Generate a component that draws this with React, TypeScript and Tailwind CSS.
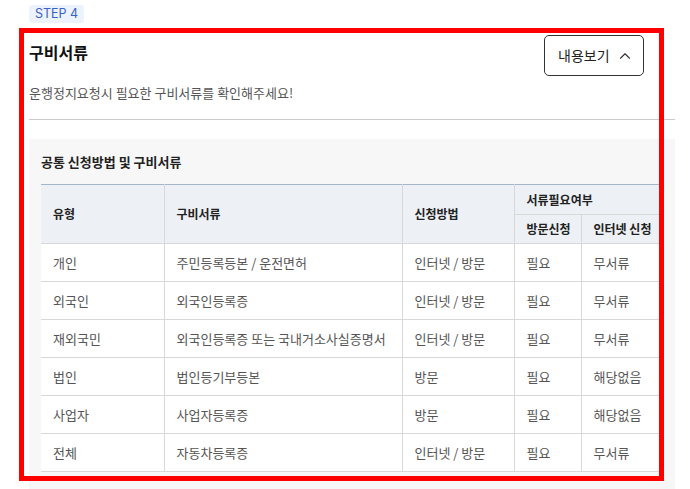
import { ChevronUp } from 'lucide-react'

const ROWS: Array<[string, string, string, string, string]> = [
  ['개인', '주민등록등본 / 운전면허', '인터넷 / 방문', '필요', '무서류'],
  ['외국인', '외국인등록증', '인터넷 / 방문', '필요', '무서류'],
  ['재외국민', '외국인등록증 또는 국내거소사실증명서', '인터넷 / 방문', '필요', '무서류'],
  ['법인', '법인등기부등본', '방문', '필요', '해당없음'],
  ['사업자', '사업자등록증', '방문', '필요', '해당없음'],
  ['전체', '자동차등록증', '인터넷 / 방문', '필요', '무서류'],
]

const th = 'border-r border-b border-[#d8d8d8] bg-[#edf0f5] pl-3 text-left text-[12px] font-bold text-[#222]'
const td = 'h-[38px] border-b border-r border-[#d8d8d8] pl-3 text-[13px] text-[#555]'

export default function App() {
  return (
    <div className="relative h-[489px] w-[690px] overflow-hidden bg-white font-['Noto_Sans_CJK_KR','Noto_Sans',sans-serif]">
      <div className="pl-[29px] pr-[15px] pt-[5px]">
        <div className="h-[18px] w-fit rounded-[3px] bg-[#edf3fd] px-[6px] text-[12.5px] leading-[18px] text-[#3b62c4] font-['Inter','Noto_Sans_CJK_KR',sans-serif]">
          STEP 4
        </div>

        <div className="mt-[12px] flex items-start justify-between">
          <h2 className="mt-[5px] text-[16px] font-bold leading-[24px] text-[#111]">구비서류</h2>
          <button
            type="button"
            className="mr-[31px] flex h-[41px] w-[100px] items-center rounded-[5px] border border-[#333] pl-[13px] text-[14px] text-[#222]"
          >
            내용보기
            <ChevronUp size={18} strokeWidth={1.5} className="ml-[6px] text-[#333]" />
          </button>
        </div>

        <p className="mt-[7px] text-[13px] leading-[20px] text-[#555]">
          운행정지요청시 필요한 구비서류를 확인해주세요!
        </p>

        <div className="mt-[16px] h-px bg-[#cccccc]" />

        <div className="mt-[19px] bg-[#f7f7f7] px-3 pb-6 pt-[13px]">
          <h3 className="text-[13px] font-bold leading-[20px] text-[#222]">공통 신청방법 및 구비서류</h3>
          <table className="mt-[12px] w-full table-fixed border-collapse border-t border-[#a7b5c9] bg-white">
            <colgroup>
              <col className="w-[123px]" />
              <col className="w-[238px]" />
              <col className="w-[112px]" />
              <col className="w-[67px]" />
              <col />
            </colgroup>
            <thead>
              <tr className="h-[30px]">
                <th rowSpan={2} className={th}>유형</th>
                <th rowSpan={2} className={th}>구비서류</th>
                <th rowSpan={2} className={th}>신청방법</th>
                <th colSpan={2} className={th}>서류필요여부</th>
              </tr>
              <tr className="h-[29px]">
                <th className={th}>방문신청</th>
                <th className={th}>인터넷 신청</th>
              </tr>
            </thead>
            <tbody>
              {ROWS.map((r) => (
                <tr key={r[0]}>
                  {r.map((c, i) => (
                    <td key={i} className={td}>{c}</td>
                  ))}
                </tr>
              ))}
            </tbody>
          </table>
        </div>
      </div>

      <div className="pointer-events-none absolute left-[19px] top-[28px] h-[453px] w-[645px] border-[5px] border-[#ff0000]" />
    </div>
  )
}
